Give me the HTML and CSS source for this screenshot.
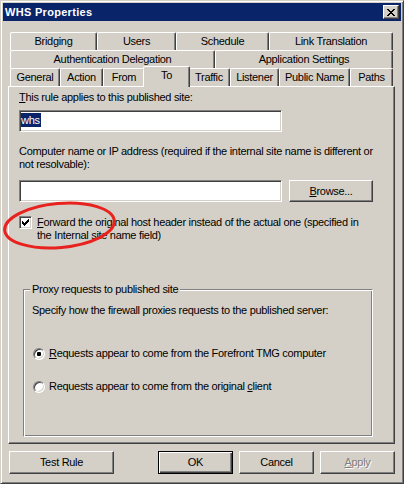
FILE: index.html
```html
<!DOCTYPE html>
<html>
<head>
<meta charset="utf-8">
<title>WHS Properties</title>
<link rel="stylesheet" href="styles.css">
</head>
<body>
<div class="window">
  <div class="titlebar">
    <span class="title">WHS Properties</span>
    <div class="close">
      <svg width="8" height="7" viewBox="0 0 8 7" shape-rendering="crispEdges"><path fill="#000" d="M0 0h2v1H0z M6 0h2v1H6z M1 1h2v1H1z M5 1h2v1H5z M2 2h4v1H2z M3 3h2v1H3z M2 4h4v1H2z M1 5h2v1H1z M5 5h2v1H5z M0 6h2v1H0z M6 6h2v1H6z"/></svg>
    </div>
  </div>
  <div class="content">
    <div class="tabs">
      <div class="tabrow row1">
        <div class="tab">Bridging</div>
        <div class="tab">Users</div>
        <div class="tab">Schedule</div>
        <div class="tab">Link Translation</div>
      </div>
      <div class="tabrow row2">
        <div class="tab">Authentication Delegation</div>
        <div class="tab">Application Settings</div>
      </div>
      <div class="tabrow row3">
        <div class="tab">General</div>
        <div class="tab">Action</div>
        <div class="tab">From</div>
        <div class="tab active">To</div>
        <div class="tab">Traffic</div>
        <div class="tab">Listener</div>
        <div class="tab">Public Name</div>
        <div class="tab">Paths</div>
      </div>
    </div>
    <div class="panel">
      <div class="line"><span class="u">T</span>his rule applies to this published site:</div>
      <div class="textbox tb1"><span class="sel">whs</span></div>
      <div class="line lbl2">Computer name or IP address (required if the internal site name is different or<br>not resolvable):</div>
      <div class="inputrow">
        <div class="textbox"></div>
        <div class="btn btn-browse"><span><span class="u">B</span>rowse...</span></div>
      </div>
      <div class="checkrow">
        <div class="checkbox">
          <svg width="11" height="11" viewBox="0 0 11 11" shape-rendering="crispEdges"><path fill="#000" d="M8 2h1v1H8z M7 3h2v1H7z M2 4h1v1H2z M6 4h3v1H6z M2 5h2v1H2z M5 5h3v1H5z M2 6h5v1H2z M3 7h3v1H3z M4 8h1v1H4z"/></svg>
        </div>
        <div class="line"><span class="u">F</span>orward the original host header instead of the actual one (specified in<br>the Internal site name field)</div>
      </div>
      <div class="group">
        <span class="legend">Proxy requests to published site</span>
        <div class="line">Specify how the firewall proxies requests to the published server:</div>
        <div class="radiorow r1">
          <div class="radio on"></div>
          <div class="line"><span class="u">R</span>equests appear to come from the Forefront TMG computer</div>
        </div>
        <div class="radiorow r2">
          <div class="radio"></div>
          <div class="line">Requests appear to come from the original <span class="u">c</span>lient</div>
        </div>
      </div>
    </div>
    <div class="buttons">
      <div class="btn btn-test">Test Rule</div>
      <div class="spacer"></div>
      <div class="btn btn-std default">OK</div>
      <div class="btn btn-std">Cancel</div>
      <div class="btn btn-std disabled"><span><span class="u">A</span>pply</span></div>
    </div>
  </div>
  <svg class="annotation" width="125" height="55" viewBox="0 0 125 55">
    <ellipse cx="58.5" cy="25.5" rx="55" ry="22" fill="none" stroke="#e8221e" stroke-width="3" transform="rotate(-5 58.5 25.5)"/>
  </svg>
</div>
</body>
</html>
```
FILE: styles.css
```css
* { box-sizing: border-box; }

html, body {
  margin: 0;
  padding: 0;
  background: #d4d0c8;
}

body {
  font-family: "Liberation Sans", Arial, sans-serif;
  font-size: 11px;
  color: #000;
  letter-spacing: -0.3px;
}

.window {
  position: relative;
  width: 404px;
  height: 484px;
  background: #d4d0c8;
  border: 1px solid;
  border-color: #d4d0c8 #404040 #404040 #d4d0c8;
  box-shadow: inset 1px 1px #fff, inset -1px -1px #808080;
  padding: 2px;
  display: flex;
  flex-direction: column;
}

.titlebar {
  height: 18px;
  flex: none;
  background: #0a246a;
  display: flex;
  align-items: center;
  justify-content: space-between;
  padding: 0 2px;
}

.title {
  color: #fff;
  font-weight: bold;
  letter-spacing: 0.3px;
  line-height: 18px;
}

.close {
  width: 16px;
  height: 14px;
  background: #d4d0c8;
  border: 1px solid;
  border-color: #fff #404040 #404040 #fff;
  box-shadow: inset -1px -1px #808080;
  display: flex;
  align-items: center;
  justify-content: center;
  padding-right: 1px;
}

.close svg { display: block; }

.content {
  flex: 1;
  padding: 11px 6px 0 5px;
  display: flex;
  flex-direction: column;
}

.tabs { margin: 0 2px; }

.tabrow {
  display: grid;
  height: 18px;
}

.row1 { grid-template-columns: 87px 79px 93px 124px; }
.row2 { grid-template-columns: 205px 178px; }
.row3 { grid-template-columns: 50px 43px 42px 43px 42px 49px 71px 43px; }

.tab {
  background: #d4d0c8;
  border-top: 1px solid #fff;
  border-left: 1px solid #fff;
  border-right: 1px solid #404040;
  box-shadow: inset -1px 0 #808080;
  border-radius: 2px 2px 0 0;
  text-align: center;
  line-height: 17px;
  white-space: nowrap;
}

.tab.active {
  position: relative;
  z-index: 1;
  margin: -2px -2px -1px;
  line-height: 16px;
  padding-bottom: 4px;
}

.panel {
  height: 358px;
  flex: none;
  border: 1px solid;
  border-color: #fff #404040 #404040 #fff;
  box-shadow: inset -1px -1px #808080;
  padding: 4px 18px 0 10px;
}

.line {
  line-height: 13px;
  white-space: nowrap;
}

.u { text-decoration: underline; }

.textbox {
  width: 263px;
  height: 22px;
  flex: none;
  background: #fff;
  border: 1px solid;
  border-color: #808080 #fff #fff #808080;
  box-shadow: inset 1px 1px #404040, inset -1px -1px #d4d0c8;
  padding: 2px 0 0 1px;
}

.sel {
  display: inline-block;
  vertical-align: top;
  background: #0a246a;
  color: #fff;
  line-height: 14px;
  padding-right: 1px;
}

.tb1 { margin-top: 6px; }
.lbl2 { margin-top: 13px; }

.inputrow {
  margin-top: 9px;
  display: flex;
  gap: 7px;
}

.btn {
  height: 23px;
  background: #d4d0c8;
  border: 1px solid;
  border-color: #fff #404040 #404040 #fff;
  box-shadow: inset -1px -1px #808080;
  display: flex;
  align-items: center;
  justify-content: center;
  white-space: nowrap;
  line-height: 13px;
}

.btn-browse {
  width: 84px;
  height: 22px;
}

.checkrow {
  margin-top: 14px;
  display: flex;
  gap: 5px;
  align-items: flex-start;
}

.checkbox {
  width: 13px;
  height: 13px;
  flex: none;
  background: #fff;
  border: 1px solid;
  border-color: #808080 #fff #fff #808080;
  box-shadow: inset 1px 1px #404040, inset -1px -1px #d4d0c8;
}

.checkbox svg { display: block; }

.group {
  position: relative;
  margin: 47px 0 0 4px;
  width: 350px;
  height: 148px;
  border: 1px solid;
  border-color: #808080 #fff #fff #808080;
  box-shadow: inset 1px 1px #fff, inset -1px -1px #808080;
  padding: 14px 0 0 8px;
}

.legend {
  position: absolute;
  top: -7px;
  left: 6px;
  padding: 0 2px;
  background: #d4d0c8;
  line-height: 13px;
  white-space: nowrap;
}

.radiorow {
  display: flex;
  align-items: center;
  gap: 4px;
  margin-left: 1px;
}

.r1 { margin-top: 30px; }
.r2 { margin-top: 20px; }

.radio {
  width: 12px;
  height: 12px;
  flex: none;
  border-radius: 50%;
  background: #fff;
  border: 1px solid;
  border-color: #808080 #fff #fff #808080;
  box-shadow: inset 1px 1px #404040, inset -1px -1px #d4d0c8;
}

.radio.on::after {
  content: "";
  display: block;
  width: 4px;
  height: 4px;
  margin: 3px;
  background: #000;
  border-radius: 1px;
}

.buttons {
  display: flex;
  gap: 6px;
  margin-top: 7px;
  padding-left: 1px;
}

.spacer { flex: 1; }

.btn-test { width: 105px; }
.btn-std { width: 75px; }

.btn.default {
  border-color: #000;
  box-shadow: inset 1px 1px #fff, inset -1px -1px #404040, inset -2px -2px #808080;
}

.btn.disabled {
  color: #808080;
  text-shadow: 1px 1px 0 #fff;
}

.annotation {
  position: absolute;
  left: 0;
  top: 199px;
  pointer-events: none;
}
```
